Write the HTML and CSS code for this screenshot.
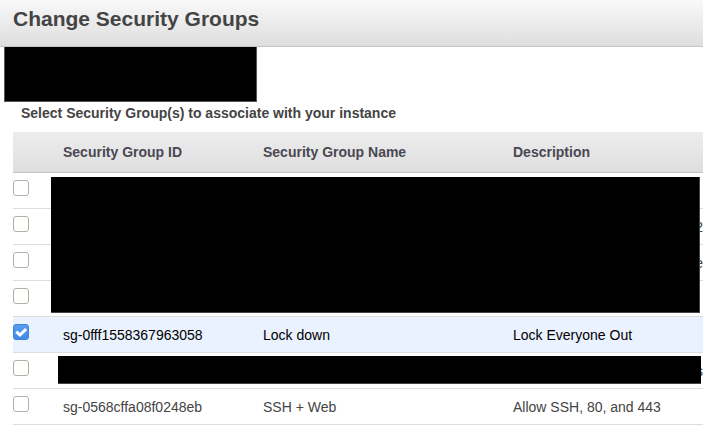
FILE: index.html
```html
<!DOCTYPE html>
<html lang="en">
<head>
<meta charset="utf-8">
<title>Change Security Groups</title>
<link rel="stylesheet" href="styles.css">
</head>
<body>
<header class="dialog-header"><h1>Change Security Groups</h1></header>
<main>
<div class="instance-mask"></div>
<h2 class="prompt">Select Security Group(s) to associate with your instance</h2>
<div class="groups">
<table>
<colgroup><col class="col-check"><col class="col-id"><col class="col-name"><col></colgroup>
<thead><tr><td></td><th scope="col">Security Group ID</th><th scope="col">Security Group Name</th><th scope="col">Description</th></tr></thead>
<tbody>
<tr><td><input type="checkbox" aria-label="Security group 1"></td><td></td><td></td><td></td></tr>
<tr><td><input type="checkbox" aria-label="Security group 2"></td><td></td><td></td><td class="clipped">2</td></tr>
<tr><td><input type="checkbox" aria-label="Security group 3"></td><td></td><td></td><td class="clipped">e</td></tr>
<tr><td><input type="checkbox" aria-label="Security group 4"></td><td></td><td></td><td></td></tr>
<tr class="selected"><td><input type="checkbox" id="lock" checked></td><td><label for="lock">sg-0fff1558367963058</label></td><td>Lock down</td><td>Lock Everyone Out</td></tr>
<tr><td><input type="checkbox" aria-label="Security group 6"></td><td></td><td></td><td class="clipped">s</td></tr>
<tr><td><input type="checkbox" id="web"></td><td><label for="web">sg-0568cffa08f0248eb</label></td><td>SSH + Web</td><td>Allow SSH, 80, and 443</td></tr>
</tbody>
</table>
<div class="mask mask-upper"></div>
<div class="mask mask-lower"></div>
</div>
</main>
</body>
</html>
```
FILE: styles.css
```css
* { box-sizing: border-box; }
body {
  margin: 0;
  background: #fff;
  color: #444;
  font: 14px/20px "Liberation Sans", Arial, sans-serif;
  overflow-x: hidden;
}
.dialog-header {
  padding: 7px 13px 15px;
  border-bottom: 1px solid #c4c4c4;
  background: linear-gradient(#f9f9f9, #dedede);
}
h1 { margin: 0; font-size: 21px; line-height: 24px; }
.instance-mask {
  width: 253px;
  height: 55px;
  margin-left: 4px;
  background: #000;
  border: 1px solid #555;
  border-top: 0;
}
.prompt {
  margin: 0;
  padding: 1px 21px 9px;
  font-size: 14px;
  line-height: 20px;
}
.groups { position: relative; margin-left: 13px; }
table { width: 100%; border-collapse: separate; border-spacing: 0; table-layout: fixed; }
.col-check { width: 50px; }
.col-id { width: 200px; }
.col-name { width: 250px; }
thead tr { background: linear-gradient(#ededed, #dedede); }
thead th, thead td {
  height: 41px;
  padding: 0;
  border-bottom: 1px solid #c4c4c4;
  text-align: left;
  color: #4a4852;
}
tbody td {
  height: 36px;
  padding: 1px 0 0;
  border-bottom: 1px solid #ddd;
  vertical-align: middle;
  white-space: nowrap;
}
tbody td:first-child { padding: 7px 0 0; vertical-align: top; }
input {
  appearance: none;
  display: block;
  width: 16px;
  height: 16px;
  margin: 0;
  border: 1px solid #b6ada5;
  border-radius: 3px;
  background: #fff;
}
input:checked {
  border-color: #3c82dc;
  background: url("data:image/svg+xml,%3Csvg xmlns='http://www.w3.org/2000/svg' viewBox='0 0 14 14'%3E%3Cpath d='M2.3 6.6l3.6 3.4 6.2-5.8' fill='none' stroke='white' stroke-width='3'/%3E%3C/svg%3E"), linear-gradient(#5a9cf0, #428ae6);
}
.selected { background: #eaf2ff; color: #000; }
.clipped { text-align: right; }
.mask { position: absolute; background: #000; border-bottom: 1px solid #444; }
.mask-upper { top: 45px; left: 38px; right: 3px; height: 136px; border-right: 1px solid #444; }
.mask-lower { top: 224px; left: 45px; right: 2px; height: 28px; }
```
